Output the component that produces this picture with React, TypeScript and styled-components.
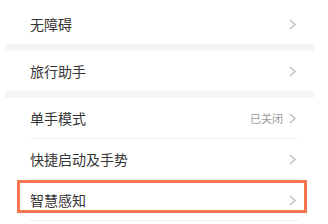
import * as React from 'react'
import styled, { createGlobalStyle } from 'styled-components'

const GlobalStyle = createGlobalStyle`
    html, body {
        margin: 0;
        padding: 0;
        background: #ffffff;
        font-family: "Noto Sans CJK SC", "Noto Sans", sans-serif;
    }
`

type Item = { title: string; value?: string }

const groups: Item[][] = [
    [{ title: '无障碍' }],
    [{ title: '旅行助手' }],
    [
        { title: '单手模式', value: '已关闭' },
        { title: '快捷启动及手势' },
        { title: '智慧感知' },
    ],
]

const Page = styled.div`
    position: relative;
    width: 328px;
    height: 224px;
    overflow: hidden;
    background: #ffffff;
`

const Card = styled.div`
    margin-left: 5px;
    width: 309px;
    padding-top: 4px;
    display: flex;
    flex-direction: column;
`

const GroupGap = styled.div`
    height: 7px;
    background: #f5f5f5;
`

const Row = styled.div`
    height: 40px;
    display: flex;
    align-items: center;
    padding: 0 18px 0 25px;
`

const Title = styled.span`
    flex: 1;
    font-size: 14px;
    color: #353535;
    line-height: 1;
`

const Value = styled.span`
    font-size: 11px;
    color: #9a9a9a;
    margin-right: 6px;
    line-height: 1;
`

const Divider = styled.div`
    margin: 0 16px 0 25px;
    height: 1px;
    background: #ededed;
`

// orange focus frame drawn over the last row
const Highlight = styled.div`
    position: absolute;
    left: 17px;
    top: 180px;
    width: 290px;
    height: 33px;
    box-sizing: border-box;
    border: 3px solid #f4774f;
    pointer-events: none;
`

const Chevron: React.FC = () => (
    <svg width="7" height="11" viewBox="0 0 7 11">
        <polyline points="1,1 6,5.5 1,10" fill="none" stroke="#b8b8b8" strokeWidth="1.3" />
    </svg>
)

const App: React.FC = () => {
    return (
        <Page>
            <GlobalStyle />
            <Card>
                {groups.map((group, gi) => (
                    <React.Fragment key={gi}>
                        {gi > 0 && <GroupGap />}
                        {group.map(item => (
                            <React.Fragment key={item.title}>
                                <Row>
                                    <Title>{item.title}</Title>
                                    {item.value && <Value>{item.value}</Value>}
                                    <Chevron />
                                </Row>
                                {group.length > 1 && <Divider />}
                            </React.Fragment>
                        ))}
                    </React.Fragment>
                ))}
            </Card>
            <Highlight />
        </Page>
    )
}

export default App
